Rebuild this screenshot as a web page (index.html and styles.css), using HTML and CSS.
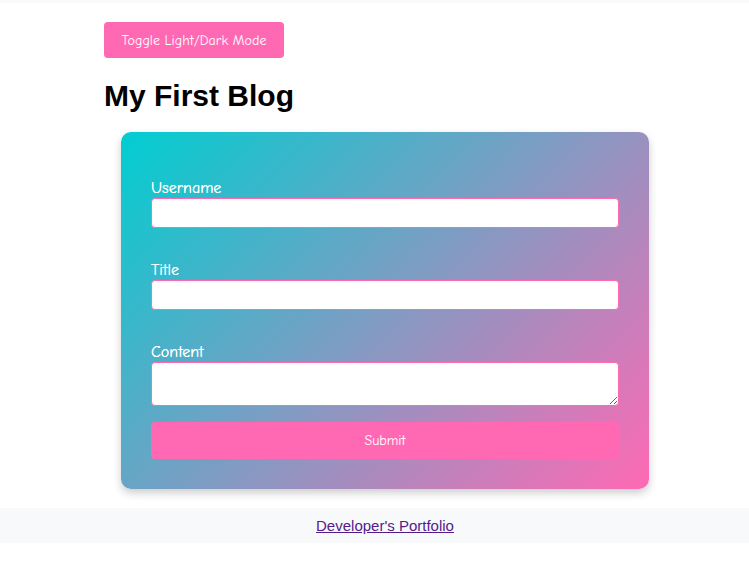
FILE: index.html
```html
<!DOCTYPE html>
<html lang="en">
<head>
<meta charset="utf-8">
<title>My First Blog</title>
<link rel="stylesheet" href="styles.css">
</head>
<body>
<div class="topbar"></div>
<main class="container">
  <button class="toggle" type="button">Toggle Light/Dark Mode</button>
  <h1 class="title">My First Blog</h1>
  <form class="card">
    <div class="group">
      <label for="username">Username</label>
      <input id="username" type="text">
    </div>
    <div class="group">
      <label for="title">Title</label>
      <input id="title" type="text">
    </div>
    <div class="group">
      <label for="content">Content</label>
      <textarea id="content"></textarea>
    </div>
    <button class="submit" type="button">Submit</button>
  </form>
</main>
<footer class="footer">
  <a href="#" class="portfolio">Developer's Portfolio</a>
</footer>
</body>
</html>
```

FILE: styles.css
```css
html, body {
  margin: 0;
  padding: 0;
  background: #ffffff;
}
body {
  font-family: "Comic Sans MS", "Comic Neue", "Open Sans", cursive, sans-serif;
}
.topbar {
  height: 3px;
  background: #f8f9fa;
}
.container {
  width: 562px;
  margin-left: 104px;
  padding-top: 19px;
  display: flex;
  flex-direction: column;
  align-items: flex-start;
}
.toggle {
  width: 180px;
  height: 36px;
  background: #ff69b4;
  color: #ffffff;
  border: none;
  border-radius: 4px;
  font-family: inherit;
  font-size: 14px;
  padding: 0;
}
.title {
  font-family: "Liberation Sans", Arial, sans-serif;
  font-weight: bold;
  font-size: 30px;
  line-height: 36px;
  margin: 20px 0 18px;
  color: #000;
}
.card {
  align-self: stretch;
  margin: 0 17px;
  padding: 30px;
  border-radius: 10px;
  background: linear-gradient(135deg, #00ced1 0%, #ff69b4 100%);
  box-shadow: 0 4px 8px rgba(0, 0, 0, 0.2);
  display: flex;
  flex-direction: column;
}
.group {
  display: flex;
  flex-direction: column;
  margin: 16px 0;
}
.group label {
  color: #ffffff;
  font-size: 16px;
  line-height: 20px;
  text-shadow: 0 0 0.4px #ffffff;
}
.group input,
.group textarea {
  box-sizing: border-box;
  width: 100%;
  border: 1px solid #ff69b4;
  border-radius: 4px;
  background: #fff;
  margin: 0;
  font-family: inherit;
}
.group input {
  height: 30px;
}
.group textarea {
  height: 44px;
  resize: vertical;
}
.submit {
  height: 37px;
  background: #ff69b4;
  color: #ffffff;
  border: none;
  border-radius: 4px;
  font-family: inherit;
  font-size: 14px;
}
.footer {
  margin-top: 19px;
  height: 35px;
  line-height: 35px;
  padding-left: 21px;
  background: #f8f9fa;
  text-align: center;
}
.portfolio {
  font-family: "Liberation Sans", Arial, sans-serif;
  font-size: 15px;
  color: #551a8b;
}
```
